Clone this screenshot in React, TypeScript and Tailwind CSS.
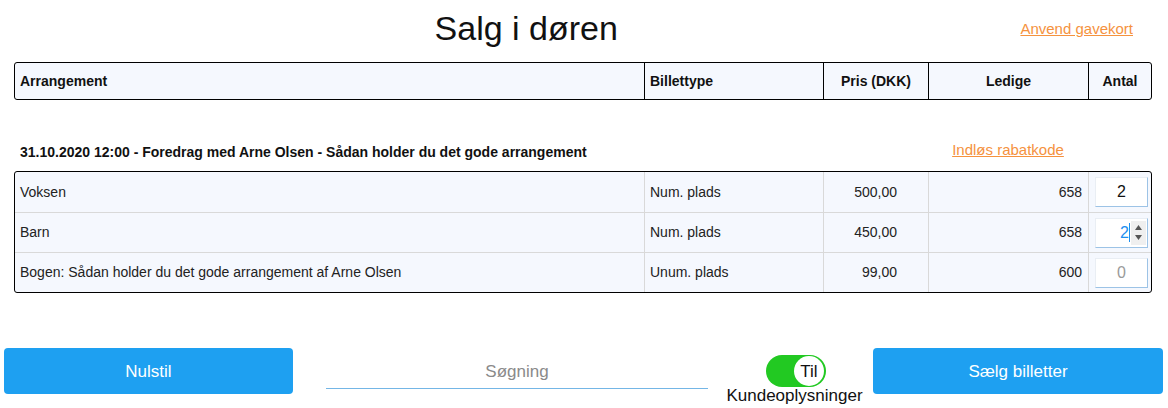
import React from "react";

type Row = { name: string; type: string; price: string; free: string; qty: string; kind: "normal" | "focus" | "empty" };

const rows: Row[] = [
  { name: "Voksen", type: "Num. plads", price: "500,00", free: "658", qty: "2", kind: "normal" },
  { name: "Barn", type: "Num. plads", price: "450,00", free: "658", qty: "2", kind: "focus" },
  { name: "Bogen: Sådan holder du det gode arrangement af Arne Olsen", type: "Unum. plads", price: "99,00", free: "600", qty: "0", kind: "empty" },
];

function QtyInput({ row }: { row: Row }) {
  const base =
    "ml-[6px] w-[53px] h-[30px] bg-white border border-[#e9eef4] border-r-[#9cc3e6] border-b-[#9cc3e6] flex items-center text-[16px]";
  if (row.kind === "focus") {
    return (
      <div className={base + " justify-end"}>
        <span className="text-[#1e90f0] leading-none">{row.qty}</span>
        <span className="w-px h-[19px] bg-[#1e90f0] mr-px" />
        <div className="w-[15px] h-[24px] bg-[#efefef] flex flex-col items-center justify-center gap-[5px] mr-px">
          <svg width="7" height="5" viewBox="0 0 7 5"><path d="M3.5 0L7 5H0z" fill="#555" /></svg>
          <svg width="7" height="5" viewBox="0 0 7 5"><path d="M0 0h7L3.5 5z" fill="#555" /></svg>
        </div>
      </div>
    );
  }
  return (
    <div className={base + " justify-center"}>
      <span className={row.kind === "empty" ? "text-[#9a9a9a]" : "text-[#111]"}>{row.qty}</span>
    </div>
  );
}

export default function App() {
  return (
    <div className="w-[1168px] h-[408px] bg-white overflow-hidden font-['Liberation_Sans',Arial,sans-serif] text-[#111]">
      {/* Title row */}
      <div className="flex h-[62px]">
        <div className="flex-1 pl-[32px] text-center text-[34px] leading-[39px] pt-[9px]">Salg i døren</div>
        <a className="mr-[35px] pt-[20px] text-[15px] leading-[17px] text-[#f5923e] underline h-fit">Anvend gavekort</a>
      </div>

      {/* Header table */}
      <div className="mx-[14px] w-[1138px] h-[38px] border border-black rounded-[3px] bg-[#f5f8fe] flex text-[14px] font-bold">
        <div className="w-[629px] pl-[5px] flex items-center">Arrangement</div>
        <div className="w-[179px] border-l border-black pl-[5px] flex items-center">Billettype</div>
        <div className="w-[105px] border-l border-black flex items-center justify-center">Pris (DKK)</div>
        <div className="w-[160px] border-l border-black flex items-center justify-center">Ledige</div>
        <div className="flex-1 border-l border-black flex items-center justify-center">Antal</div>
      </div>

      {/* Event title row */}
      <div className="mx-[14px] w-[1138px] h-[71px] flex">
        <div className="flex-1 pl-[6px] pt-[44px] text-[14px] leading-[16px] font-bold">
          31.10.2020 12:00 - Foredrag med Arne Olsen - Sådan holder du det gode arrangement
        </div>
        <div className="w-[160px] pt-[38px] text-center">
          <a className="text-[15px] leading-[17px] text-[#f5923e] underline">Indløs rabatkode</a>
        </div>
        <div className="w-[64px]" />
      </div>

      {/* Body table */}
      <div className="mx-[14px] w-[1138px] border border-black rounded-[3px] bg-[#f5f8fe] text-[14px] text-[#222]">
        {rows.map((r, i) => (
          <div key={i} className={"h-[40px] flex" + (i > 0 ? " border-t border-[#d9d9d9]" : "")}>
            <div className="w-[629px] pl-[5px] flex items-center">{r.name}</div>
            <div className="w-[179px] border-l border-[#d9d9d9] pl-[5px] flex items-center">{r.type}</div>
            <div className="w-[105px] border-l border-[#d9d9d9] pr-[31px] flex items-center justify-end">{r.price}</div>
            <div className="w-[160px] border-l border-[#d9d9d9] pr-[6px] flex items-center justify-end">{r.free}</div>
            <div className="flex-1 border-l border-[#d9d9d9] flex items-center">
              <QtyInput row={r} />
            </div>
          </div>
        ))}
      </div>

      {/* Bottom bar */}
      <div className="mt-[55px] flex items-start h-[60px] text-[17px]">
        <button className="ml-[4px] w-[289px] h-[46px] bg-[#1ea0f1] rounded-[4px] text-white pt-[2px]">Nulstil</button>
        <div className="ml-[33px] w-[382px] h-[41px] border-b border-[#74b6e6] flex items-center justify-center pt-[7px] text-[#8a8a8a]">
          Søgning
        </div>
        <div className="ml-[19px] w-[135px] flex flex-col items-center">
          <div className="mt-[7px] ml-[3px] w-[60px] h-[32px] rounded-full bg-[#22c922] flex items-center justify-end pr-[2px]">
            <div className="w-[30px] h-[30px] rounded-full bg-white flex items-center justify-center text-[17px] leading-none">Til</div>
          </div>
          <div className="leading-[19px] whitespace-nowrap -mt-[1px]">Kundeoplysninger</div>
        </div>
        <button className="ml-[11px] w-[290px] h-[46px] bg-[#1ea0f1] rounded-[4px] text-white pt-[2px]">Sælg billetter</button>
      </div>
    </div>
  );
}
